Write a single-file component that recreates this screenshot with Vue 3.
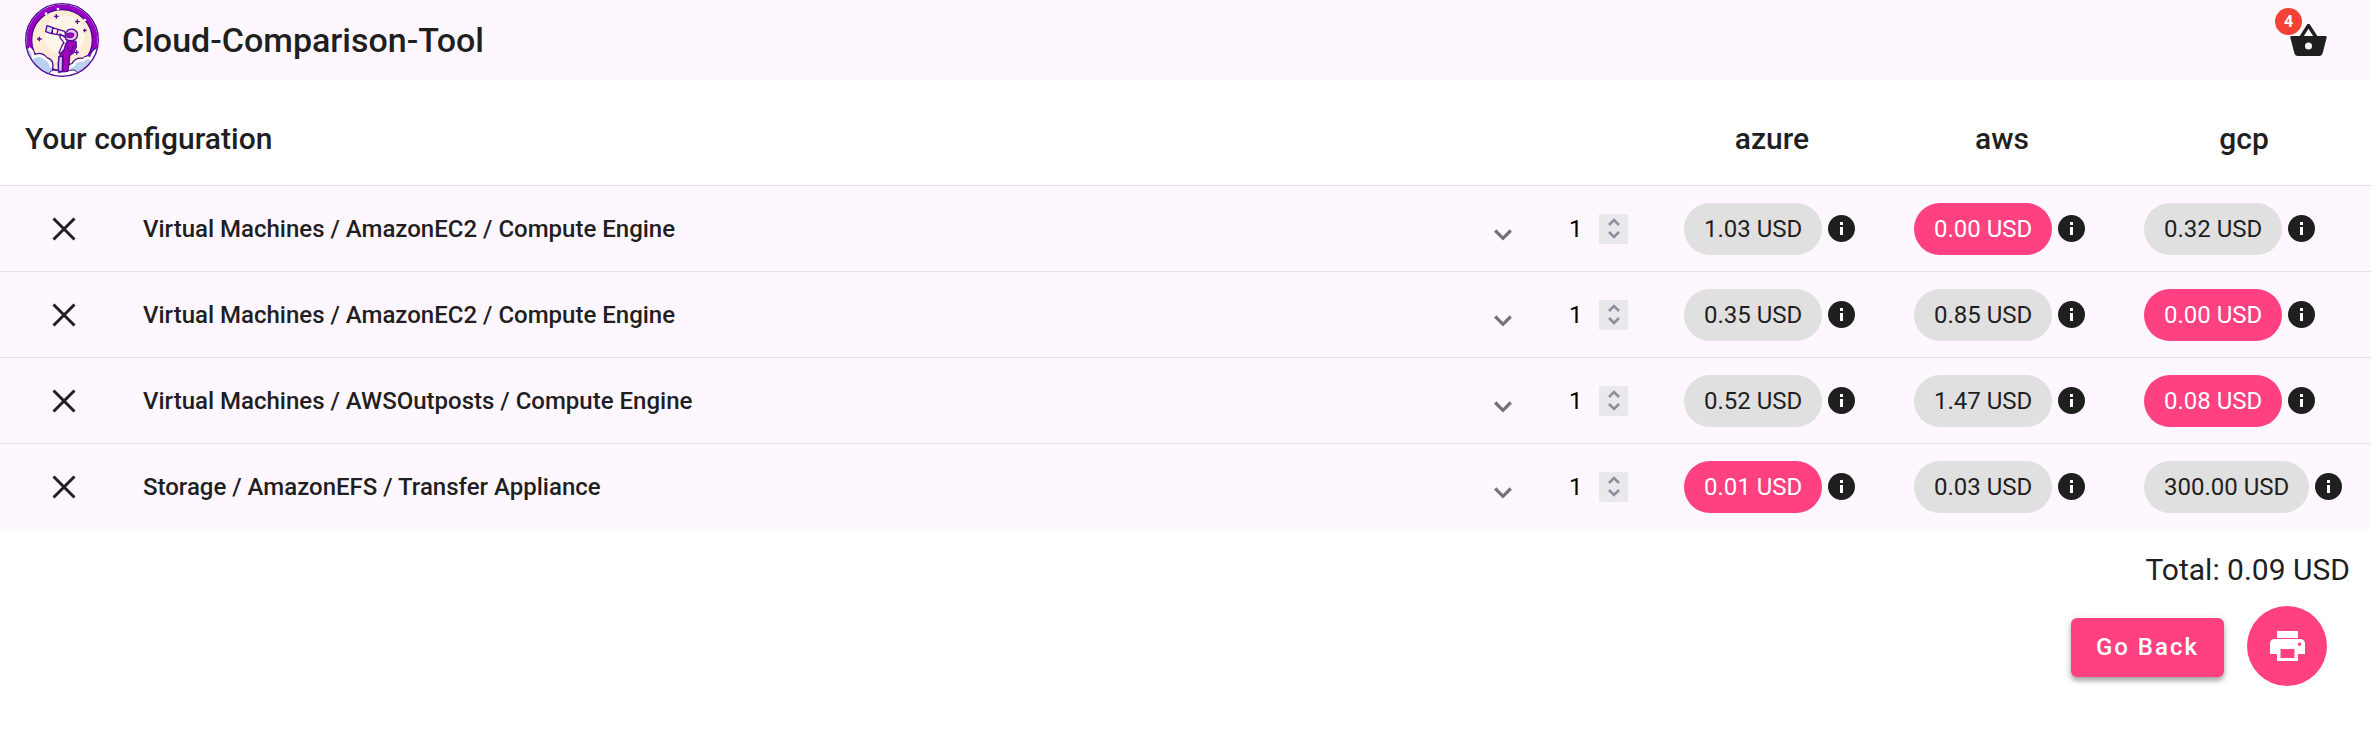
<script setup>
import { ref, computed } from 'vue'

const providers = ['azure', 'aws', 'gcp']

const rows = ref([
  { id: 1, name: 'Virtual Machines / AmazonEC2 / Compute Engine', quantity: 1, prices: ['1.03', '0.00', '0.32'], best: 1 },
  { id: 2, name: 'Virtual Machines / AmazonEC2 / Compute Engine', quantity: 1, prices: ['0.35', '0.85', '0.00'], best: 2 },
  { id: 3, name: 'Virtual Machines / AWSOutposts / Compute Engine', quantity: 1, prices: ['0.52', '1.47', '0.08'], best: 2 },
  { id: 4, name: 'Storage / AmazonEFS / Transfer Appliance', quantity: 1, prices: ['0.01', '0.03', '300.00'], best: 0 },
])

const total = computed(() =>
  rows.value.reduce((sum, row) => sum + Number(row.prices[row.best]) * row.quantity, 0).toFixed(2)
)

function remove(id) {
  rows.value = rows.value.filter((row) => row.id !== id)
}

function step(row, amount) {
  row.quantity = Math.max(1, row.quantity + amount)
}

function printPage() {
  window.print()
}
</script>

<template>
  <div class="page">
    <header class="toolbar">
      <svg class="logo" viewBox="0 0 222 222" aria-hidden="true">
        <defs>
          <clipPath id="disc"><circle cx="111" cy="111" r="107" /></clipPath>
        </defs>
        <g clip-path="url(#disc)">
          <circle cx="111" cy="111" r="107" fill="#9a00c4" />
          <circle cx="111" cy="111" r="91" fill="#fdebd6" stroke="#4b0a8e" stroke-width="4" />
          <circle cx="119" cy="98" r="60" fill="#fdf6e8" />
          <path d="M0 134Q24 134 27 156Q48 144 66 164Q88 170 83 196L83 224L0 224Z" fill="#b9d0f2" stroke="#4b0a8e" stroke-width="4" />
          <path d="M11 136Q24 142 25 163Q48 151 63 169Q80 178 77 193" fill="none" stroke="#fff" stroke-width="8" />
          <path d="M222 134Q202 134 196 160Q182 156 173 166Q151 163 141 182Q125 184 122 207L130 224H222Z" fill="#b9d0f2" stroke="#4b0a8e" stroke-width="4" />
          <path d="M213 142Q201 151 199 167Q183 161 174 172Q153 170 145 187Q132 190 131 201" fill="none" stroke="#fff" stroke-width="8" />
          <path d="M65 222Q79 194 94 203L136 202Q153 196 163 218L111 222Z" fill="#fff" stroke="#4b0a8e" stroke-width="3" />
        </g>
        <circle cx="111" cy="111" r="109" fill="none" stroke="#4b0a8e" stroke-width="4" />
        <g fill="none" stroke="#5b0b9c" stroke-width="4">
          <path d="M94 33V47M87 40H101M157 49V63M150 56H164M43 101V115M36 108H50M155 141V155M148 148H162M179 77V88M174 82H185" />
        </g>
        <g fill="#fff"><circle cx="63" cy="32" r="4" /><circle cx="99" cy="18" r="4" /><circle cx="180" cy="51" r="4" /></g>
        <g stroke="#56089a" stroke-width="4" stroke-linejoin="round" stroke-linecap="round">
          <path d="M82 74L119 85L123 100L82 92Z" fill="#fdf6e8" />
          <path d="M66 68L84 74L79 92L62 86Z" fill="#d7e4f8" />
          <path d="M99 80L96 93" fill="none" />
          <path d="M105 93L123 105L128 120L118 139L105 153L102 149L111 128L117 119L105 104Z" fill="#fff" />
          <path d="M122 123L132 112L153 115L154 132L145 150L134 157L132 184L128 205L101 207L100 184L102 161L116 146Z" fill="#a407b8" />
          <path d="M102 161L113 161L112 204L101 207L100 184Z" fill="#d5c6ef" />
          <path d="M115 158Q111 181 114 203M128 130Q130 145 139 147M146 126Q139 139 141 145" fill="none" />
          <path d="M122 108Q119 87 131 80Q148 74 156 88Q161 101 151 109Q139 118 122 108Z" fill="#e9c7ed" />
          <path d="M126 92Q137 87 146 92Q150 99 140 104L127 103Z" fill="#a407b8" stroke-width="3" />
        </g>
      </svg>
      <h1 class="title">Cloud-Comparison-Tool</h1>
      <button class="cart" type="button" aria-label="Open cart">
        <svg class="cart-icon" viewBox="0 0 37 33" aria-hidden="true">
          <path d="M18.500 1.500L10.500 14M18.500 1.500L26.500 14" fill="none" stroke="#1f1f1f" stroke-width="3.400" stroke-linecap="round" />
          <path fill-rule="evenodd" fill="#1f1f1f" d="M1.500 12H35.500Q37 12 36.700 13.500L32.700 29Q31.900 32 29 32H8Q5.100 32 4.300 29L.3 13.500Q0 12 1.500 12ZM18.500 18.500A3.500 3.500 0 1 0 18.500 25.500A3.500 3.500 0 1 0 18.500 18.500Z" />
        </svg>
        <span class="badge">{{ rows.length }}</span>
      </button>
    </header>

    <main>
      <table class="config">
        <colgroup>
          <col class="col-remove" />
          <col />
          <col class="col-quantity" />
          <col class="col-price" />
          <col class="col-price" />
          <col class="col-last" />
        </colgroup>
        <thead>
          <tr>
            <th class="heading" colspan="3" scope="col">Your configuration</th>
            <th v-for="provider in providers" :key="provider" scope="col">{{ provider }}</th>
          </tr>
        </thead>
        <tbody>
          <tr v-for="row in rows" :key="row.id">
            <td class="remove-cell">
              <button class="remove" type="button" aria-label="Remove" @click="remove(row.id)">
                <svg viewBox="0 0 24 24" aria-hidden="true">
                  <path d="M1.500 1.500L22.500 22.500M22.500 1.500L1.500 22.500" fill="none" stroke="#1f1f1f" stroke-width="3" />
                </svg>
              </button>
            </td>
            <td class="service-cell">
              <button class="service" type="button" aria-expanded="false">
                <span>{{ row.name }}</span>
                <svg class="chevron" viewBox="0 0 18 12" aria-hidden="true">
                  <path d="M1.200 1.500L9 9.300L16.800 1.500" fill="none" stroke="#75707a" stroke-width="3.200" />
                </svg>
              </button>
            </td>
            <td class="quantity-cell">
              <div class="quantity">
                <input v-model.number="row.quantity" type="number" min="1" aria-label="Quantity" />
                <span class="stepper">
                  <button type="button" aria-label="Increase" @click="step(row, 1)">
                    <svg viewBox="0 0 12 8" aria-hidden="true"><path d="M1 7L6 2L11 7" /></svg>
                  </button>
                  <button type="button" aria-label="Decrease" @click="step(row, -1)">
                    <svg viewBox="0 0 12 8" aria-hidden="true"><path d="M1 1L6 6L11 1" /></svg>
                  </button>
                </span>
              </div>
            </td>
            <td v-for="(price, i) in row.prices" :key="i" class="price-cell">
              <div class="price">
                <span class="chip" :class="{ best: row.best === i }">{{ price }} USD</span>
                <button class="info" type="button" aria-label="Price details">
                  <svg viewBox="0 0 27 27" aria-hidden="true">
                    <circle cx="13.500" cy="13.500" r="13.500" fill="#1f1f1f" />
                    <path d="M12 7H15V10H12ZM12 12H15V20H12Z" fill="#fff" />
                  </svg>
                </button>
              </div>
            </td>
          </tr>
        </tbody>
      </table>

      <p class="total">Total: {{ total }} USD</p>

      <div class="actions">
        <button class="back" type="button">Go Back</button>
        <button class="print" type="button" aria-label="Print" @click="printPage">
          <svg viewBox="0 0 35 30" aria-hidden="true">
            <path fill="#fff" d="M7 0H28V7H7Z" />
            <path fill="#fff" fill-rule="evenodd" d="M5 8H30Q35 8 35 13V23H28V30H7V23H0V13Q0 8 5 8ZM10.500 18V27H24.500V18ZM29.500 11.500A1.700 1.700 0 1 0 29.500 14.900A1.700 1.700 0 1 0 29.500 11.500Z" />
          </svg>
        </button>
      </div>
    </main>
  </div>
</template>

<style>
body {
  margin: 0;
  background: #fff;
}
</style>

<style scoped>
.page {
  font-family: Roboto, "Liberation Sans", sans-serif;
  font-size: 24px;
  color: #1f1f1f;
}

button {
  padding: 0;
  border: 0;
  background: none;
  font: inherit;
  color: inherit;
  cursor: pointer;
}

svg {
  display: block;
}

.toolbar {
  display: flex;
  align-items: center;
  box-sizing: border-box;
  height: 80px;
  padding: 0 44px 0 25px;
  background: #fef7ff;
}

.logo {
  width: 74px;
  height: 74px;
}

.title {
  margin: 0 auto 0 23px;
  font-size: 34px;
  font-weight: 500;
  line-height: 48px;
}

.cart {
  position: relative;
}

.cart-icon {
  width: 37px;
  height: 33px;
}

.badge {
  position: absolute;
  top: -16px;
  left: -15px;
  width: 27px;
  height: 27px;
  border-radius: 50%;
  background: #f44336;
  color: #fff;
  font-size: 16px;
  font-weight: 700;
  line-height: 27px;
  text-align: center;
}

.config {
  width: 100%;
  border-collapse: separate;
  border-spacing: 0;
  table-layout: fixed;
}

.col-remove {
  width: 128px;
}

.col-quantity {
  width: 118px;
}

.col-price {
  width: 230px;
}

.col-last {
  width: 254px;
}

th {
  height: 92px;
  padding: 13px 0 0;
  font-size: 30px;
  font-weight: 500;
  line-height: 40px;
  text-align: center;
}

th.heading {
  padding-left: 25px;
  text-align: left;
}

td {
  height: 85px;
  padding: 0;
  border-top: 1px solid #e7e0eb;
  background: #fef7ff;
}

.remove {
  display: block;
  margin-left: 52px;
}

.remove svg {
  width: 24px;
  height: 24px;
}

.service {
  display: flex;
  align-items: center;
  justify-content: space-between;
  box-sizing: border-box;
  width: 100%;
  padding: 0 27px 0 15px;
  font-weight: 500;
  line-height: 36px;
}

.chevron {
  width: 18px;
  height: 12px;
  margin-top: 12px;
}

.quantity {
  display: flex;
  align-items: center;
  justify-content: flex-end;
  padding-right: 29px;
}

.quantity input {
  width: 30px;
  padding: 0;
  border: 0;
  background: none;
  font: inherit;
  color: #000;
  appearance: textfield;
}

.quantity input::-webkit-inner-spin-button {
  appearance: none;
  margin: 0;
}

.stepper {
  display: grid;
  align-content: center;
  justify-items: center;
  gap: 5px;
  width: 29px;
  height: 30px;
  background: #e9e8ed;
}

.stepper svg {
  width: 12px;
  height: 8px;
  fill: none;
  stroke: #8e8c9d;
  stroke-width: 2.5;
}

.price {
  display: flex;
  align-items: center;
  gap: 6px;
  padding-left: 27px;
}

.chip {
  padding: 0 20px;
  border-radius: 26px;
  background: #e0e0e0;
  line-height: 52px;
  white-space: nowrap;
}

.chip.best {
  background: #ff4081;
  color: #fff;
}

.info svg {
  width: 27px;
  height: 27px;
}

.total {
  margin: 21px 21px 0 0;
  font-size: 30px;
  line-height: 40px;
  text-align: right;
}

.actions {
  display: flex;
  align-items: flex-end;
  justify-content: flex-end;
  gap: 23px;
  padding: 16px 44px 0 0;
}

.back {
  margin-bottom: 9px;
  padding: 0 25px;
  border-radius: 6px;
  background: #ff4081;
  box-shadow: 0 4px 4px rgba(0, 0, 0, 0.25), 0 2px 8px rgba(0, 0, 0, 0.16);
  color: #fff;
  font-weight: 500;
  letter-spacing: 2px;
  line-height: 59px;
}

.print {
  display: grid;
  place-items: center;
  width: 80px;
  height: 80px;
  border-radius: 50%;
  background: #ff4081;
}

.print svg {
  width: 35px;
  height: 30px;
}
</style>
